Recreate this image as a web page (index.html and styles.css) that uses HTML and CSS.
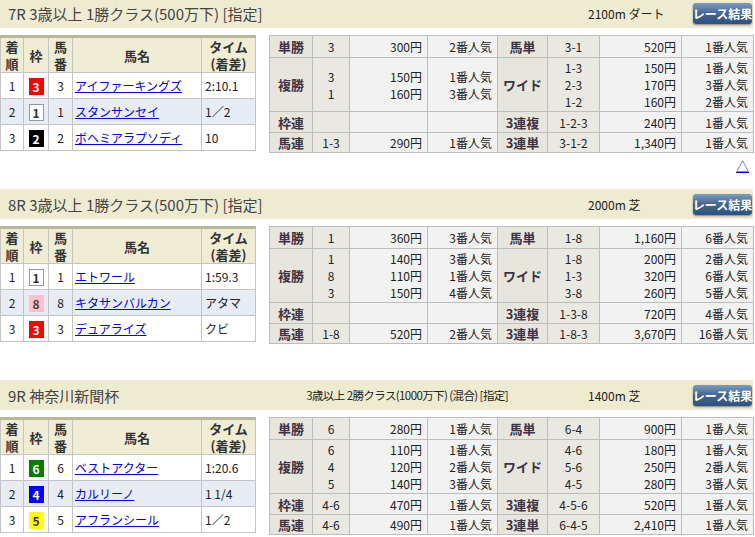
FILE: index.html
```html
<!DOCTYPE html>
<html lang="ja">
<head>
<meta charset="utf-8">
<title>レース結果</title>
<link rel="stylesheet" href="styles.css">
</head>
<body>
<div class="page">

<section class="race">
  <div class="race-head">
    <div class="title">7R 3歳以上 1勝クラス(500万下) [指定]</div>
    <div class="dist">2100m ダート</div>
    <a class="btn">レース結果</a>
  </div>
  <div class="race-body">
    <table class="order">
      <colgroup><col class="c1"><col class="c2"><col class="c3"><col class="c4"><col class="c5"></colgroup>
      <tr class="hd"><th>着<br>順</th><th>枠</th><th>馬<br>番</th><th>馬名</th><th>タイム<br>(着差)</th></tr>
      <tr><td class="ctr">1</td><td class="ctr"><span class="waku w3">3</span></td><td class="ctr">3</td><td class="nm"><a>アイファーキングズ</a></td><td class="tm">2:10.1</td></tr>
      <tr class="alt"><td class="ctr">2</td><td class="ctr"><span class="waku w1">1</span></td><td class="ctr">1</td><td class="nm"><a>スタンサンセイ</a></td><td class="tm">1／2</td></tr>
      <tr class="last"><td class="ctr">3</td><td class="ctr"><span class="waku w2">2</span></td><td class="ctr">2</td><td class="nm"><a>ボヘミアラプソディ</a></td><td class="tm">10</td></tr>
    </table>
    <table class="pay">
      <colgroup><col class="p1"><col class="p2"><col class="p3"><col class="p4"><col class="p5"><col class="p6"><col class="p7"><col class="p8"></colgroup>
      <tr class="r1"><th>単勝</th><td class="cb">3</td><td class="yen">300円</td><td class="pop">2番人気</td><th>馬単</th><td class="cb">3-1</td><td class="yen">520円</td><td class="pop">1番人気</td></tr>
      <tr class="r2"><th>複勝</th><td class="cb">3<br>1</td><td class="yen">150円<br>160円</td><td class="pop">1番人気<br>3番人気</td><th>ワイド</th><td class="cb">1-3<br>2-3<br>1-2</td><td class="yen">150円<br>170円<br>160円</td><td class="pop">1番人気<br>3番人気<br>2番人気</td></tr>
      <tr class="r3"><th>枠連</th><td class="cb"></td><td class="yen"></td><td class="pop"></td><th>3連複</th><td class="cb">1-2-3</td><td class="yen">240円</td><td class="pop">1番人気</td></tr>
      <tr class="r4"><th>馬連</th><td class="cb">1-3</td><td class="yen">290円</td><td class="pop">1番人気</td><th>3連単</th><td class="cb">3-1-2</td><td class="yen">1,340円</td><td class="pop">1番人気</td></tr>
    </table>
  </div>
  <div class="race-foot"><a class="up">△</a></div>
</section>

<section class="race">
  <div class="race-head">
    <div class="title">8R 3歳以上 1勝クラス(500万下) [指定]</div>
    <div class="dist">2000m 芝</div>
    <a class="btn">レース結果</a>
  </div>
  <div class="race-body">
    <table class="order">
      <colgroup><col class="c1"><col class="c2"><col class="c3"><col class="c4"><col class="c5"></colgroup>
      <tr class="hd"><th>着<br>順</th><th>枠</th><th>馬<br>番</th><th>馬名</th><th>タイム<br>(着差)</th></tr>
      <tr><td class="ctr">1</td><td class="ctr"><span class="waku w1">1</span></td><td class="ctr">1</td><td class="nm"><a>エトワール</a></td><td class="tm">1:59.3</td></tr>
      <tr class="alt"><td class="ctr">2</td><td class="ctr"><span class="waku w8">8</span></td><td class="ctr">8</td><td class="nm"><a>キタサンバルカン</a></td><td class="tm">アタマ</td></tr>
      <tr class="last"><td class="ctr">3</td><td class="ctr"><span class="waku w3">3</span></td><td class="ctr">3</td><td class="nm"><a>デュアライズ</a></td><td class="tm">クビ</td></tr>
    </table>
    <table class="pay">
      <colgroup><col class="p1"><col class="p2"><col class="p3"><col class="p4"><col class="p5"><col class="p6"><col class="p7"><col class="p8"></colgroup>
      <tr class="r1"><th>単勝</th><td class="cb">1</td><td class="yen">360円</td><td class="pop">3番人気</td><th>馬単</th><td class="cb">1-8</td><td class="yen">1,160円</td><td class="pop">6番人気</td></tr>
      <tr class="r2"><th>複勝</th><td class="cb">1<br>8<br>3</td><td class="yen">140円<br>110円<br>150円</td><td class="pop">3番人気<br>1番人気<br>4番人気</td><th>ワイド</th><td class="cb">1-8<br>1-3<br>3-8</td><td class="yen">200円<br>320円<br>260円</td><td class="pop">2番人気<br>6番人気<br>5番人気</td></tr>
      <tr class="r3"><th>枠連</th><td class="cb"></td><td class="yen"></td><td class="pop"></td><th>3連複</th><td class="cb">1-3-8</td><td class="yen">720円</td><td class="pop">4番人気</td></tr>
      <tr class="r4"><th>馬連</th><td class="cb">1-8</td><td class="yen">520円</td><td class="pop">2番人気</td><th>3連単</th><td class="cb">1-8-3</td><td class="yen">3,670円</td><td class="pop">16番人気</td></tr>
    </table>
  </div>
  <div class="race-foot"></div>
</section>

<section class="race">
  <div class="race-head">
    <div class="title">9R 神奈川新聞杯</div>
    <div class="sub">3歳以上 2勝クラス(1000万下) (混合) [指定]</div>
    <div class="dist">1400m 芝</div>
    <a class="btn">レース結果</a>
  </div>
  <div class="race-body">
    <table class="order">
      <colgroup><col class="c1"><col class="c2"><col class="c3"><col class="c4"><col class="c5"></colgroup>
      <tr class="hd"><th>着<br>順</th><th>枠</th><th>馬<br>番</th><th>馬名</th><th>タイム<br>(着差)</th></tr>
      <tr><td class="ctr">1</td><td class="ctr"><span class="waku w6">6</span></td><td class="ctr">6</td><td class="nm"><a>ベストアクター</a></td><td class="tm">1:20.6</td></tr>
      <tr class="alt"><td class="ctr">2</td><td class="ctr"><span class="waku w4">4</span></td><td class="ctr">4</td><td class="nm"><a>カルリーノ</a></td><td class="tm">1 1/4</td></tr>
      <tr class="last"><td class="ctr">3</td><td class="ctr"><span class="waku w5">5</span></td><td class="ctr">5</td><td class="nm"><a>アフランシール</a></td><td class="tm">1／2</td></tr>
    </table>
    <table class="pay">
      <colgroup><col class="p1"><col class="p2"><col class="p3"><col class="p4"><col class="p5"><col class="p6"><col class="p7"><col class="p8"></colgroup>
      <tr class="r1"><th>単勝</th><td class="cb">6</td><td class="yen">280円</td><td class="pop">1番人気</td><th>馬単</th><td class="cb">6-4</td><td class="yen">900円</td><td class="pop">1番人気</td></tr>
      <tr class="r2"><th>複勝</th><td class="cb">6<br>4<br>5</td><td class="yen">110円<br>120円<br>140円</td><td class="pop">1番人気<br>2番人気<br>3番人気</td><th>ワイド</th><td class="cb">4-6<br>5-6<br>4-5</td><td class="yen">180円<br>250円<br>280円</td><td class="pop">1番人気<br>2番人気<br>3番人気</td></tr>
      <tr class="r3"><th>枠連</th><td class="cb">4-6</td><td class="yen">470円</td><td class="pop">1番人気</td><th>3連複</th><td class="cb">4-5-6</td><td class="yen">520円</td><td class="pop">1番人気</td></tr>
      <tr class="r4"><th>馬連</th><td class="cb">4-6</td><td class="yen">490円</td><td class="pop">1番人気</td><th>3連単</th><td class="cb">6-4-5</td><td class="yen">2,410円</td><td class="pop">1番人気</td></tr>
    </table>
  </div>
</section>

</div>
</body>
</html>
```

FILE: styles.css
```css
html, body {
  margin: 0;
  padding: 0;
  background: #ffffff;
}
body {
  font-family: "Noto Sans CJK JP", "Noto Sans", sans-serif;
  font-size: 12px;
  color: #333333;
}
.page {
  width: 753px;
  margin-top: -2px;
}
.race-head {
  display: flex;
  align-items: center;
  height: 30px;
  background: #eeecd0;
}
.title {
  flex: 1;
  padding-left: 8px;
  font-size: 15px;
  color: #444444;
  white-space: nowrap;
}
.sub {
  font-size: 11.5px;
  letter-spacing: -0.6px;
  color: #222222;
  margin-right: 80px;
  white-space: nowrap;
}
.dist {
  width: 105px;
  font-size: 12px;
  color: #222222;
  white-space: nowrap;
}
.btn {
  display: flex;
  align-items: center;
  justify-content: center;
  width: 59px;
  height: 21px;
  margin-right: 1px;
  border-radius: 3px;
  background: linear-gradient(#7c9cc2, #41658f 50%, #2f5180);
  box-shadow: 0 1px 2px rgba(0,0,0,0.45);
  color: #ffffff;
  font-size: 12px;
  font-weight: bold;
  white-space: nowrap;
}
.race-body {
  display: flex;
  align-items: flex-start;
  gap: 13px;
  margin-top: 7px;
}
table {
  border-collapse: collapse;
  table-layout: fixed;
}
.order {
  width: 255px;
  border-top: 3px solid #b9b89a;
}
.c1 { width: 23px; }
.c2 { width: 25px; }
.c3 { width: 24px; }
.c4 { width: 129px; }
.c5 { width: 54px; }
.order th, .order td {
  border: 1px solid #c4c4c4;
  padding: 0;
}
.order th {
  background: #efedd3;
  font-size: 13px;
  font-weight: bold;
  line-height: 17px;
  color: #333333;
  height: 34px;
}
.order td {
  height: 25px;
  line-height: 16px;
  font-size: 12px;
  color: #222222;
}
.order tr.alt td {
  background: #e8ecf4;
}
.order .ctr { text-align: center; }
.order .nm { padding-left: 2px; }
.order .tm { padding-left: 3px; }
.order .nm a {
  color: #0000ee;
  text-decoration: underline;
}
.waku {
  display: inline-block;
  width: 15px;
  height: 17px;
  line-height: 17px;
  font-weight: bold;
  font-size: 12px;
  text-align: center;
  vertical-align: middle;
  box-sizing: border-box;
}
.w1 { background: #ffffff; border: 1px solid #999999; color: #333333; line-height: 15px; }
.w2 { background: #000000; color: #ffffff; }
.w3 { background: #ff0000; color: #ffffff; }
.w4 { background: #0000ff; color: #ffffff; }
.w5 { background: #ffff00; color: #333333; }
.w6 { background: #008000; color: #ffffff; }
.w8 { background: #ffc0cb; color: #444444; }
.pay {
  width: 484px;
}
.p1 { width: 43px; }
.p2 { width: 37px; }
.p3 { width: 78px; }
.p4 { width: 70px; }
.p5 { width: 50px; }
.p6 { width: 52px; }
.p7 { width: 82px; }
.p8 { width: 72px; }
.pay th, .pay td {
  border: 1px solid #bdbdbd;
  padding: 0;
  font-size: 12px;
  line-height: 17px;
  white-space: nowrap;
}
.pay th {
  background: #e7e6dc;
  color: #3d3344;
  font-weight: bold;
  font-size: 13px;
  text-align: center;
}
.pay td {
  color: #222222;
}
.pay .cb {
  background: #e9e9e1;
  text-align: center;
}
.pay .yen, .pay .pop {
  background: #f2f2f2;
  text-align: right;
  padding-right: 5px;
}
.pay .r1 th, .pay .r1 td { height: 21px; }
.pay .r2 th, .pay .r2 td { height: 53px; }
.pay .r3 th, .pay .r3 td { height: 20px; }
.pay .r4 th, .pay .r4 td { height: 19px; }
.race-foot {
  height: 36px;
  display: flex;
  justify-content: flex-end;
  align-items: flex-start;
}
.up {
  margin-top: 5px;
  margin-right: 4px;
  color: #0000ee;
  text-decoration: underline;
  font-size: 13px;
  line-height: 16px;
}
```
